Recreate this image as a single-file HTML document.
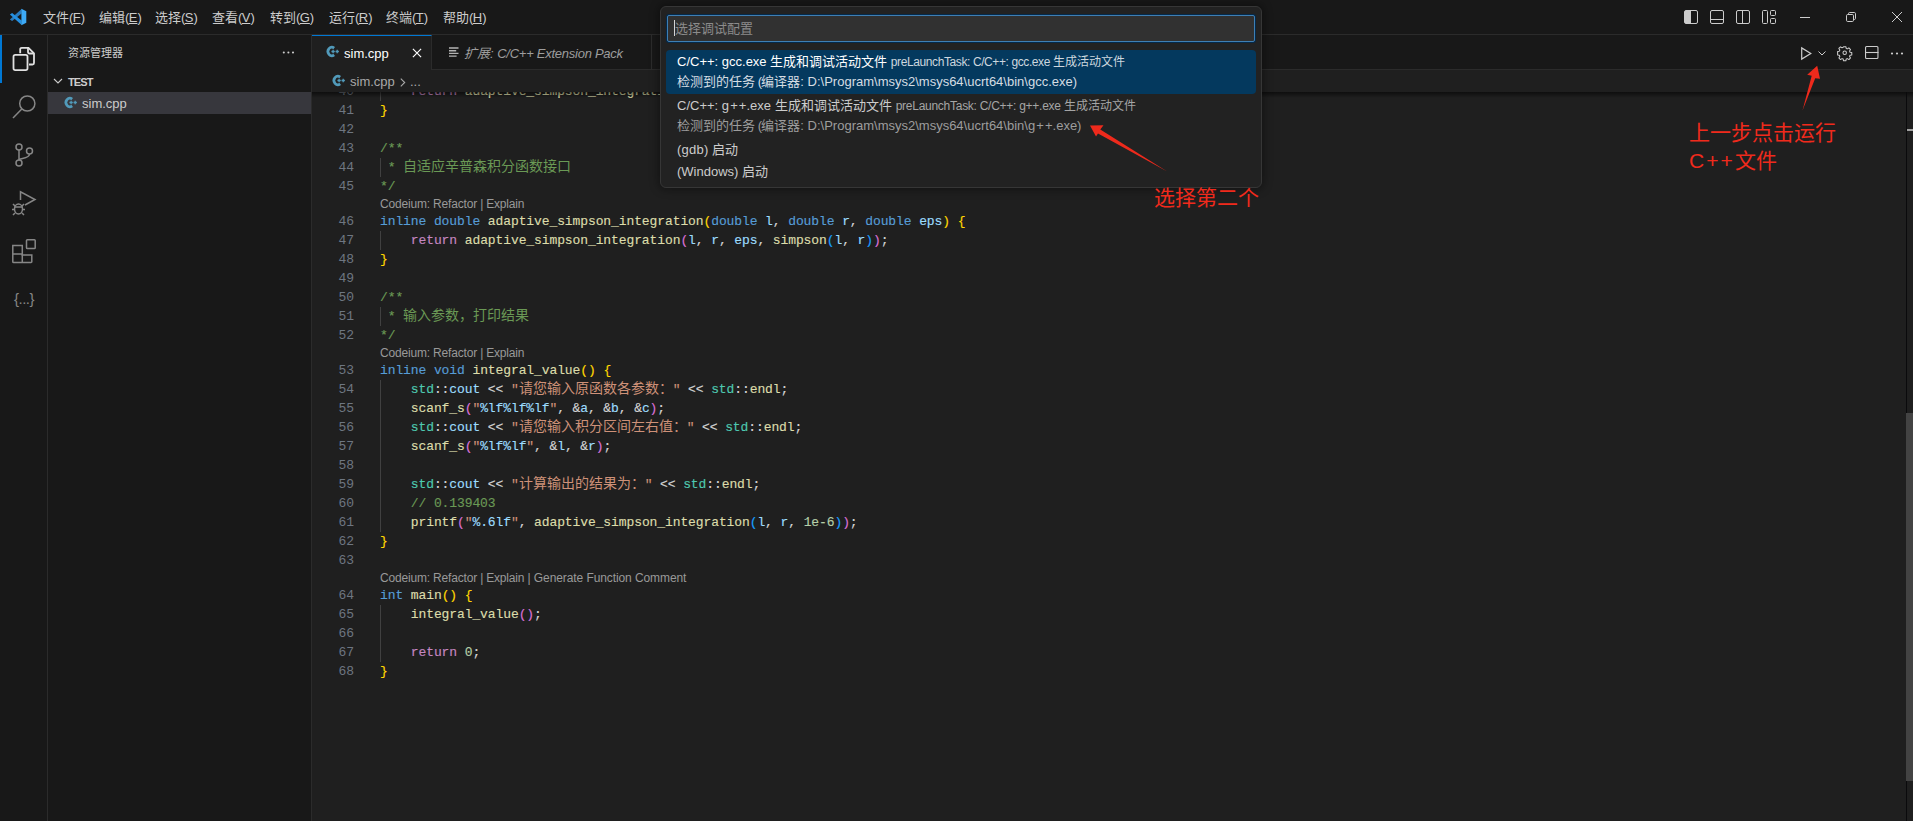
<!DOCTYPE html>
<html lang="zh-CN"><head><meta charset="utf-8">
<style>
*{box-sizing:border-box;margin:0;padding:0}
html,body{width:1913px;height:821px;overflow:hidden;background:#1f1f1f}
body{font-family:"Liberation Sans",sans-serif;font-size:13px;color:#ccc;position:relative}
.abs{position:absolute}
svg{position:absolute;overflow:visible}
#title{left:0;top:0;width:1913px;height:35px;background:#181818;border-bottom:1px solid #2b2b2b}
.menu u{letter-spacing:0}.menu b{font-weight:normal;letter-spacing:-0.6px}.menu{position:absolute;top:0;height:35px;line-height:35px;font-size:13px;color:#ccc;white-space:nowrap}
#act{left:0;top:35px;width:48px;height:786px;background:#181818;border-right:1px solid #2b2b2b}
#side{left:48px;top:35px;width:264px;height:786px;background:#181818;border-right:1px solid #2b2b2b}
#tabs{left:312px;top:35px;width:1601px;height:35px;background:#181818;border-bottom:1px solid #2b2b2b}
#tab1{left:312px;top:35px;width:120px;height:35px;background:#1f1f1f;border-top:1px solid #0078d4;border-right:1px solid #2b2b2b}
#tab2{left:432px;top:35px;width:220px;height:35px;border-right:1px solid #2b2b2b}
#crumb{left:312px;top:70px;width:1601px;height:22px;background:#1f1f1f}
#ed{left:312px;top:92px;width:1601px;height:729px;background:#1f1f1f;overflow:hidden}
.ln{position:absolute;left:0;width:42px;text-align:right;color:#6e7681;font-family:"Liberation Mono",monospace;font-size:13px;letter-spacing:-0.1px;height:19px;line-height:19px}
.cl{-webkit-text-stroke:.15px;position:absolute;left:68px;white-space:pre;font-family:"Liberation Mono",monospace;font-size:13px;letter-spacing:-0.1px;height:19px;line-height:19px;color:#d4d4d4}
.cl i{-webkit-text-stroke:0;line-height:1px;font-style:normal;font-size:14px;letter-spacing:0;font-family:"Liberation Sans",sans-serif}
.lens{position:absolute;left:68px;white-space:pre;font-size:12px;letter-spacing:-0.18px;color:#999;height:16px;line-height:16px}
.k{color:#569cd6}.c{color:#c586c0}.f{color:#dcdcaa}.v{color:#9cdcfe}.s{color:#ce9178}.g{color:#6a9955}.n{color:#b5cea8}.t{color:#4ec9b0}
.b1{color:#ffd700}.b2{color:#da70d6}.b3{color:#179fff}
.guide{position:absolute;left:68px;width:1px;background:#404040}
.tx{position:absolute;white-space:nowrap;line-height:15px}
.red{position:absolute;font-weight:300;color:#f02a1c;font-size:21px;white-space:nowrap;line-height:26px}
</style></head><body>
<div id="title" class="abs"></div>
<div id="act" class="abs"></div>
<div id="side" class="abs"></div>
<div id="tabs" class="abs"></div>
<div id="tab1" class="abs"></div>
<div id="tab2" class="abs"></div>
<div id="crumb" class="abs"></div>
<div id="ed" class="abs">
<div class="ln" style="top:-10px">40</div>
<div class="guide" style="top:-10px;height:19px"></div>
<div class="cl" style="top:-10px">    <span class="c">return</span> <span class="f">adaptive_simpson_integration</span><span class="b2">(</span><span class="v">l</span>, <span class="v">mid</span>, <span class="v">eps</span> / 2, <span class="v">fl</span><span class="b2">)</span> + <span class="f">adaptive_simpson_integration</span><span class="b2">(</span><span class="v">mid</span>, <span class="v">r</span><span class="b2">)</span>;</div>
<div class="ln" style="top:9px">41</div>
<div class="cl" style="top:9px"><span class="b1">}</span></div>
<div class="ln" style="top:28px">42</div>
<div class="ln" style="top:47px">43</div>
<div class="cl" style="top:47px"><span class="g">/**</span></div>
<div class="ln" style="top:66px">44</div>
<div class="guide" style="top:66px;height:19px"></div>
<div class="cl" style="top:66px"><span class="g"> * <i>自适应辛普森积分函数接口</i></span></div>
<div class="ln" style="top:85px">45</div>
<div class="cl" style="top:85px"><span class="g">*/</span></div>
<div class="lens" style="top:104px">Codeium: Refactor | Explain</div>
<div class="ln" style="top:120px">46</div>
<div class="cl" style="top:120px"><span class="k">inline</span> <span class="k">double</span> <span class="f">adaptive_simpson_integration</span><span class="b1">(</span><span class="k">double</span> <span class="v">l</span>, <span class="k">double</span> <span class="v">r</span>, <span class="k">double</span> <span class="v">eps</span><span class="b1">)</span> <span class="b1">{</span></div>
<div class="ln" style="top:139px">47</div>
<div class="guide" style="top:139px;height:19px"></div>
<div class="cl" style="top:139px">    <span class="c">return</span> <span class="f">adaptive_simpson_integration</span><span class="b2">(</span><span class="v">l</span>, <span class="v">r</span>, <span class="v">eps</span>, <span class="f">simpson</span><span class="b3">(</span><span class="v">l</span>, <span class="v">r</span><span class="b3">)</span><span class="b2">)</span>;</div>
<div class="ln" style="top:158px">48</div>
<div class="cl" style="top:158px"><span class="b1">}</span></div>
<div class="ln" style="top:177px">49</div>
<div class="ln" style="top:196px">50</div>
<div class="cl" style="top:196px"><span class="g">/**</span></div>
<div class="ln" style="top:215px">51</div>
<div class="guide" style="top:215px;height:19px"></div>
<div class="cl" style="top:215px"><span class="g"> * <i>输入参数，打印结果</i></span></div>
<div class="ln" style="top:234px">52</div>
<div class="cl" style="top:234px"><span class="g">*/</span></div>
<div class="lens" style="top:253px">Codeium: Refactor | Explain</div>
<div class="ln" style="top:269px">53</div>
<div class="cl" style="top:269px"><span class="k">inline</span> <span class="k">void</span> <span class="f">integral_value</span><span class="b1">()</span> <span class="b1">{</span></div>
<div class="ln" style="top:288px">54</div>
<div class="guide" style="top:288px;height:19px"></div>
<div class="cl" style="top:288px">    <span class="t">std</span>::<span class="v">cout</span> &lt;&lt; <span class="s">"<i>请您输入原函数各参数：</i>"</span> &lt;&lt; <span class="t">std</span>::<span class="f">endl</span>;</div>
<div class="ln" style="top:307px">55</div>
<div class="guide" style="top:307px;height:19px"></div>
<div class="cl" style="top:307px">    <span class="f">scanf_s</span><span class="b2">(</span><span class="s">"</span><span class="v">%lf%lf%lf</span><span class="s">"</span>, &amp;<span class="v">a</span>, &amp;<span class="v">b</span>, &amp;<span class="v">c</span><span class="b2">)</span>;</div>
<div class="ln" style="top:326px">56</div>
<div class="guide" style="top:326px;height:19px"></div>
<div class="cl" style="top:326px">    <span class="t">std</span>::<span class="v">cout</span> &lt;&lt; <span class="s">"<i>请您输入积分区间左右值：</i>"</span> &lt;&lt; <span class="t">std</span>::<span class="f">endl</span>;</div>
<div class="ln" style="top:345px">57</div>
<div class="guide" style="top:345px;height:19px"></div>
<div class="cl" style="top:345px">    <span class="f">scanf_s</span><span class="b2">(</span><span class="s">"</span><span class="v">%lf%lf</span><span class="s">"</span>, &amp;<span class="v">l</span>, &amp;<span class="v">r</span><span class="b2">)</span>;</div>
<div class="ln" style="top:364px">58</div>
<div class="guide" style="top:364px;height:19px"></div>
<div class="ln" style="top:383px">59</div>
<div class="guide" style="top:383px;height:19px"></div>
<div class="cl" style="top:383px">    <span class="t">std</span>::<span class="v">cout</span> &lt;&lt; <span class="s">"<i>计算输出的结果为：</i>"</span> &lt;&lt; <span class="t">std</span>::<span class="f">endl</span>;</div>
<div class="ln" style="top:402px">60</div>
<div class="guide" style="top:402px;height:19px"></div>
<div class="cl" style="top:402px">    <span class="g">// 0.139403</span></div>
<div class="ln" style="top:421px">61</div>
<div class="guide" style="top:421px;height:19px"></div>
<div class="cl" style="top:421px">    <span class="f">printf</span><span class="b2">(</span><span class="s">"</span><span class="v">%.6lf</span><span class="s">"</span>, <span class="f">adaptive_simpson_integration</span><span class="b3">(</span><span class="v">l</span>, <span class="v">r</span>, <span class="n">1e-6</span><span class="b3">)</span><span class="b2">)</span>;</div>
<div class="ln" style="top:440px">62</div>
<div class="cl" style="top:440px"><span class="b1">}</span></div>
<div class="ln" style="top:459px">63</div>
<div class="lens" style="top:478px">Codeium: Refactor | Explain<span style="letter-spacing:-.09px"> | Generate Function Comment</span></div>
<div class="ln" style="top:494px">64</div>
<div class="cl" style="top:494px"><span class="k">int</span> <span class="f">main</span><span class="b1">()</span> <span class="b1">{</span></div>
<div class="ln" style="top:513px">65</div>
<div class="guide" style="top:513px;height:19px"></div>
<div class="cl" style="top:513px">    <span class="f">integral_value</span><span class="b2">()</span>;</div>
<div class="ln" style="top:532px">66</div>
<div class="guide" style="top:532px;height:19px"></div>
<div class="ln" style="top:551px">67</div>
<div class="guide" style="top:551px;height:19px"></div>
<div class="cl" style="top:551px">    <span class="c">return</span> <span class="n">0</span>;</div>
<div class="ln" style="top:570px">68</div>
<div class="cl" style="top:570px"><span class="b1">}</span></div>
<div class="abs" style="left:0;top:0;width:1601px;height:6px;background:linear-gradient(#000 0,rgba(0,0,0,0) 100%);opacity:.55"></div>
</div>
<svg width="0" height="0" style="left:0;top:0"><defs><g id="cpp"><path d="M7.200 2.100A3.950 4.150 0 1 0 7.200 8.900" fill="none" stroke="#519aba" stroke-width="2.700"/><path d="M4.400 5.500h3.400M6.100 3.800v3.400M8.500 5.500h3.400M10.200 3.800v3.400" fill="none" stroke="#519aba" stroke-width="1.300"/></g></defs></svg>
<!-- title bar -->
<svg style="left:0;top:0" width="48" height="34" viewBox="0 0 48 34"><path d="M21.600 8.900L21.600 13.500L12.100 21L9.900 19.500Z" fill="#2a7bbd"/><path d="M9.900 14.500L12.100 13L21.600 20.500L21.600 25.100Z" fill="#2490e2"/><path d="M21.400 8.800L26.300 11.200L26.300 22.800L21.400 25.200Z" fill="#3daaf6"/></svg>
<div class="menu" style="left:43px">文件<b>(<u>F</u>)</b></div>
<div class="menu" style="left:99px">编辑<b>(<u>E</u>)</b></div>
<div class="menu" style="left:155px">选择<b>(<u>S</u>)</b></div>
<div class="menu" style="left:212px">查看<b>(<u>V</u>)</b></div>
<div class="menu" style="left:270px">转到<b>(<u>G</u>)</b></div>
<div class="menu" style="left:329px">运行<b>(<u>R</u>)</b></div>
<div class="menu" style="left:386px">终端<b>(<u>T</u>)</b></div>
<div class="menu" style="left:443px">帮助<b>(<u>H</u>)</b></div>
<!-- layout icons -->
<svg style="left:1684px;top:10px" width="14" height="14" viewBox="0 0 14 14" fill="none" stroke="#ccc"><rect x=".5" y=".5" width="13" height="13" rx="1.500"/><path d="M1 1h5.500v12H1z" fill="#ccc" stroke="none"/><path d="M6.500 .500v13"/></svg>
<svg style="left:1710px;top:10px" width="14" height="14" viewBox="0 0 14 14" fill="none" stroke="#ccc"><rect x=".5" y=".5" width="13" height="13" rx="1.500"/><path d="M.5 9.5h13"/></svg>
<svg style="left:1736px;top:10px" width="14" height="14" viewBox="0 0 14 14" fill="none" stroke="#ccc"><rect x=".5" y=".5" width="13" height="13" rx="1.500"/><path d="M6.500 .500v13"/></svg>
<svg style="left:1762px;top:10px" width="14" height="14" viewBox="0 0 14 14" fill="none" stroke="#ccc"><rect x=".500" y=".500" width="5" height="13" rx="1"/><rect x="8.500" y=".500" width="5" height="5" rx="1"/><rect x="8.500" y="8.500" width="5" height="5" rx="1"/></svg>
<!-- window controls -->
<svg style="left:1800px;top:12px" width="10" height="10" viewBox="0 0 10 10" stroke="#ccc" fill="none"><path d="M0 5.5h10"/></svg>
<svg style="left:1846px;top:12px" width="10" height="10" viewBox="0 0 10 10" stroke="#ccc" fill="none"><rect x=".5" y="2.5" width="7" height="7" rx="1.2"/><path d="M2.5 2.5v-.8a1.2 1.2 0 0 1 1.2-1.2h4.6a1.2 1.2 0 0 1 1.2 1.2v4.600a1.2 1.2 0 0 1-1.2 1.200h-.8"/></svg>
<svg style="left:1892px;top:12px" width="10" height="10" viewBox="0 0 10 10" stroke="#ccc" fill="none"><path d="M0 0l10 10M10 0L0 10"/></svg>
<!-- activity bar -->
<div class="abs" style="left:0;top:35px;width:2px;height:48px;background:#0078d4"></div>
<svg style="left:12px;top:47px" width="24" height="24" viewBox="0 0 24 24" fill="none" stroke="#e0e0e0" stroke-width="1.800"><path d="M8.200 6.300V2.300a1.500 1.500 0 0 1 1.500-1.500h6.800l5.500 5.500v9.700a1.500 1.500 0 0 1-1.500 1.500h-3.500"/><path d="M16 .800v4.200a1.500 1.500 0 0 0 1.500 1.500h4.200"/><rect x="1.500" y="7.800" width="14" height="15.300" rx="1.800"/></svg>
<svg style="left:12px;top:95px" width="24" height="24" viewBox="0 0 24 24" fill="none" stroke="#868686" stroke-width="1.500"><circle cx="15.300" cy="8.500" r="7.600"/><path d="M9.800 14L1 23"/></svg>
<svg style="left:12px;top:143px" width="24" height="24" viewBox="0 0 24 24" fill="none" stroke="#868686" stroke-width="1.500"><circle cx="7" cy="4" r="3"/><circle cx="7" cy="20" r="3"/><circle cx="17.500" cy="8" r="3"/><path d="M7 7v10M17.500 11c0 4-6 4-10.500 5.500"/></svg>
<svg style="left:12px;top:191px" width="24" height="24" viewBox="0 0 24 24" fill="none" stroke="#868686" stroke-width="1.500"><path d="M8.500 9V.800L23 8.500 13 14"/><ellipse cx="6.500" cy="18" rx="4" ry="5"/><path d="M2.500 16h8M0 18.500h2.500M10.500 18.500H13M1 13l2 2M12 13l-2 2M1 24l2-2M12 24l-2-2"/></svg>
<svg style="left:12px;top:239px" width="24" height="24" viewBox="0 0 24 24" fill="none" stroke="#868686" stroke-width="1.500"><path d="M.800 6.500h9.500v9.500h9.500v6.700a.8.800 0 0 1-.8.800H1.600a.8.800 0 0 1-.8-.8z"/><path d="M.800 15h9.500v8.500M10.300 15"/><rect x="14.500" y=".800" width="8.700" height="8.700" rx=".8"/></svg>
<div class="tx" style="left:12px;top:291px;width:24px;text-align:center;font-size:15px;color:#868686;letter-spacing:-.5px">{...}</div>
<!-- sidebar -->
<div class="tx" style="left:68px;top:46px;font-size:11px;color:#ccc">资源管理器</div>
<svg style="left:282px;top:51px" width="13" height="3" viewBox="0 0 13 3" fill="#ccc"><circle cx="1.800" cy="1.500" r="1.050"/><circle cx="6.400" cy="1.500" r="1.050"/><circle cx="11" cy="1.500" r="1.050"/></svg>
<svg style="left:53px;top:76px" width="10" height="10" viewBox="0 0 10 10" fill="none" stroke="#ccc" stroke-width="1.100"><path d="M1 3l4 4 4-4"/></svg>
<div class="tx" style="left:68px;top:75px;font-size:11px;font-weight:bold;letter-spacing:-.9px;color:#ccc">TEST</div>
<div class="abs" style="left:48px;top:92px;width:263px;height:22px;background:#37373d"></div>
<div class="tx" style="left:82px;top:96px;font-size:13px;color:#ccc">sim.cpp</div>
<!-- tabs -->
<svg style="left:326.7px;top:46.2px" width="12" height="11" viewBox="0 0 12 11"><use href="#cpp"/></svg>
<svg style="left:332.6px;top:75.2px" width="12" height="11" viewBox="0 0 12 11"><use href="#cpp"/></svg>
<svg style="left:64.7px;top:97.4px" width="12" height="11" viewBox="0 0 12 11"><use href="#cpp"/></svg>

<div class="tx" style="left:344px;top:46px;font-size:13px;color:#fff">sim.cpp</div>
<svg style="left:412px;top:48px" width="10" height="10" viewBox="0 0 11 11" stroke="#fff" stroke-width="1.300" fill="none"><path d="M1 1l9 9M10 1L1 10"/></svg>
<svg style="left:449.400px;top:47px" width="10" height="10" viewBox="0 0 10 10" stroke="#b4b4b4" stroke-width="1.400" fill="none"><path d="M0 1h9.500M0 3.700h7.200M0 6.400h9.500M0 9.100h7.600"/></svg>
<div class="tx" style="left:464px;top:46px;font-size:13px;color:#9d9d9d;font-style:italic">扩展: <span style="letter-spacing:-.26px">C/C++ Extension Pack</span></div>
<!-- editor actions -->
<svg style="left:1801px;top:47px" width="11" height="13" viewBox="0 0 11 13" fill="none" stroke="#ccc" stroke-width="1.200"><path d="M.700 .900v11.200L9.800 6.500z"/></svg>
<svg style="left:1818px;top:51px" width="8" height="5" viewBox="0 0 8 5" fill="none" stroke="#ccc" stroke-width="1"><path d="M.500 .500L4 4 7.500 .500"/></svg>
<svg style="left:1838.300px;top:46.300px" width="13.400" height="13.400" viewBox="0 0 14 14" fill="none" stroke="#ccc" stroke-width="1.100"><circle cx="7" cy="7" r="1.800"/><path d="M5.800 .700h2.400l.4 1.800 1.200.5 1.600-1 1.700 1.700-1 1.600.5 1.200 1.800.4v2.400l-1.800.4-.5 1.200 1 1.600-1.700 1.700-1.600-1-1.200.5-.4 1.800H5.800l-.4-1.800-1.200-.5-1.600 1-1.700-1.700 1-1.600-.5-1.200-1.800-.4V5.800l1.800-.4.5-1.200-1-1.600 1.700-1.700 1.600 1 1.200-.5z" stroke-linejoin="round"/></svg>
<svg style="left:1865px;top:46px" width="14" height="13" viewBox="0 0 14 13" fill="none" stroke="#ccc" stroke-width="1.100"><rect x=".550" y=".550" width="12.400" height="11.900" rx="1"/><path d="M.500 6.500h13"/></svg>
<svg style="left:1890px;top:51.500px" width="14" height="3" viewBox="0 0 14 3" fill="#ccc"><circle cx="2" cy="1.500" r="1.100"/><circle cx="7" cy="1.500" r="1.100"/><circle cx="12" cy="1.500" r="1.100"/></svg>
<!-- breadcrumb -->
<div class="tx" style="left:350px;top:74px;font-size:13px;color:#a9a9a9">sim.cpp</div>
<svg style="left:399.500px;top:78px" width="5.500" height="9" viewBox="0 0 7 11" fill="none" stroke="#a9a9a9" stroke-width="1.400"><path d="M1 .500l5 5-5 5"/></svg>
<div class="tx" style="left:410px;top:74px;font-size:13px;color:#a9a9a9">...</div>

<!-- scrollbar -->
<div class="abs" style="left:1906px;top:92px;width:1px;height:729px;background:#0a0a0c"></div>
<div class="abs" style="left:1907px;top:129px;width:6px;height:2px;background:#a0a0a0"></div>
<div class="abs" style="left:1906px;top:413px;width:7px;height:368px;background:#434343"></div>
<!-- quick input -->
<div class="abs" style="left:660px;top:6px;width:602px;height:182px;background:#222;border:1px solid #363636;border-radius:6px;box-shadow:0 0 8px 2px rgba(0,0,0,.36)"></div>
<div class="abs" style="left:667px;top:15px;width:588px;height:27px;background:#313131;border:1px solid #3f7fb3;border-radius:2px;box-shadow:0 0 0 1px #04294a"></div>
<div class="abs" style="left:674px;top:20px;width:1px;height:16px;background:#d4d4d4"></div>
<div class="tx" style="left:675px;top:21px;font-size:13px;color:#8b8b8b">选择调试配置</div>
<div class="abs" style="left:666px;top:50px;width:590px;height:44px;background:#04395e;border-radius:4px"></div>
<div class="tx" style="left:677px;top:54px;font-size:13px;color:#fff">C/C++: gcc.exe 生成和调试活动文件 <span style="font-size:12px;color:#cdd7df;margin-left:0"><span style="letter-spacing:-.4px">preLaunchTask: C/C++: gcc.exe </span>生成活动文件</span></div>
<div class="tx" style="left:677px;top:74px;font-size:13px;color:#d5dde3">检测到的任务<span style="letter-spacing:-.8px"> (</span>编译器: D:\Program\msys2\msys64\ucrt64\bin\gcc.exe)</div>
<div class="tx" style="left:677px;top:98px;font-size:13px;color:#ccc">C/C++: <span style="letter-spacing:1.100px">g+</span>+.exe 生成和调试活动文件 <span style="font-size:12px;color:#a5a5a5;margin-left:.500px"><span style="letter-spacing:-.27px">preLaunchTask: C/C++: g++.exe </span>生成活动文件</span></div>
<div class="tx" style="left:677px;top:118px;font-size:13px;color:#9d9d9d">检测到的任务<span style="letter-spacing:-.8px"> (</span>编译器: D:\Program\msys2\msys64\ucrt64\bin\<span style="letter-spacing:1.100px">g+</span>+.exe)</div>
<div class="tx" style="left:677px;top:142px;font-size:13px;color:#ccc"><span style="letter-spacing:.25px">(gdb)</span> 启动</div>
<div class="tx" style="left:677px;top:164px;font-size:13px;color:#ccc">(Windows) 启动</div>
<!-- annotations -->
<div class="red" style="left:1154px;top:185px">选择第二个</div>
<div class="red" style="left:1689px;top:120px">上一步点击运行</div>
<div class="red" style="left:1689px;top:148px"><span style="letter-spacing:2px">C++</span>文件</div>
<svg style="left:0;top:0" width="1913" height="821"><path d="M1090 125.400L1103.500 125.200L1100.300 129.400L1167.200 171.400L1098 133.600L1096 136.600Z" fill="#ee2a1c"/><path d="M1817.200 65.700L1807.200 74.700L1811.700 75.800L1802.500 110.500L1815.200 78.300L1820 78.800Z" fill="#ee2a1c"/></svg>

</body></html>
